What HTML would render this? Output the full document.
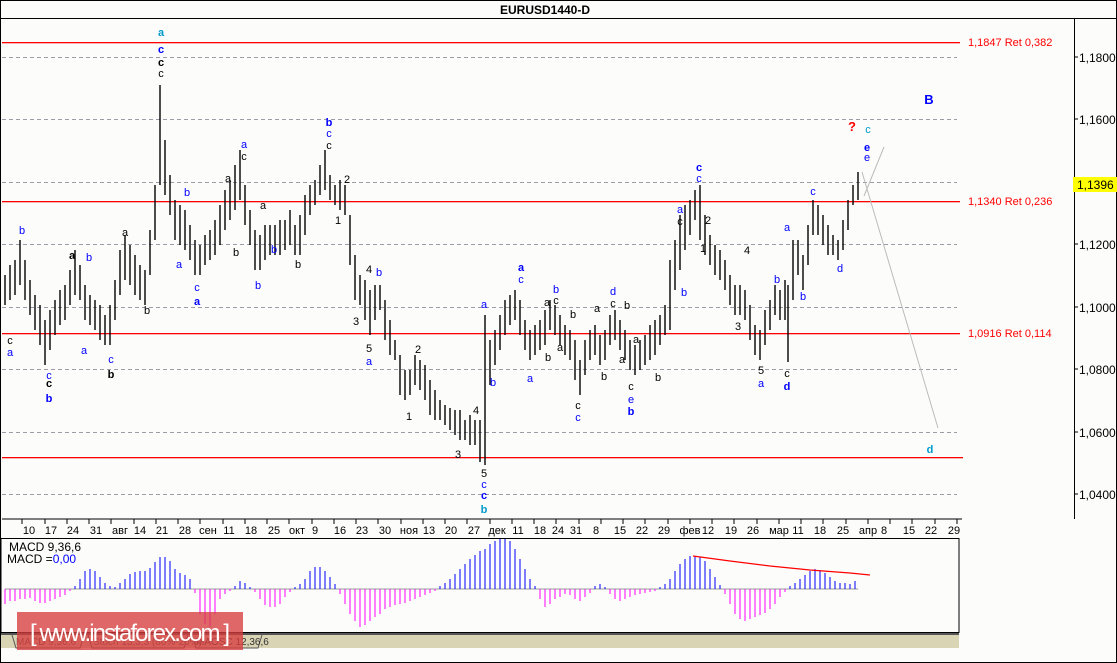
<!DOCTYPE html>
<html><head><meta charset="utf-8"><style>
html,body{margin:0;padding:0;background:#fff;}
svg{display:block;font-family:"Liberation Sans",sans-serif;}
</style></head><body>
<svg width="1117" height="663" viewBox="0 0 1117 663">
<rect x="0" y="0" width="1117" height="663" fill="#fcfdfb"/>
<rect x="0.5" y="0.5" width="1116" height="662" fill="none" stroke="#000"/>
<line x1="0" y1="18.5" x2="1117" y2="18.5" stroke="#000"/>
<text x="545" y="14" font-size="12" font-weight="bold" text-anchor="middle">EURUSD1440-D</text>
<line x1="1074.5" y1="18" x2="1074.5" y2="519" stroke="#000"/>
<g font-size="12" fill="#000">
<path d="M1074 57h4M1074 119h4M1074 244h4M1074 307h4M1074 369h4M1074 432h4M1074 494h4" stroke="#000"/>
<text x="1079" y="62">1,1800</text><text x="1079" y="124">1,1600</text><text x="1079" y="249">1,1200</text>
<text x="1079" y="312">1,1000</text><text x="1079" y="374">1,0800</text><text x="1079" y="437">1,0600</text><text x="1079" y="499">1,0400</text>
<rect x="1073" y="177" width="44" height="15" fill="#ffff00"/><text x="1077" y="189">1,1396</text>
</g>
<g stroke="#a09aa6" stroke-dasharray="4,3">
<path d="M2 57.5H957M2 119.5H957M2 182.5H957M2 244.5H957M2 307.5H957M2 369.5H957M2 432.5H957M2 494.5H957"/>
</g>
<g fill="#f00">
<rect x="2" y="42" width="958" height="1.3"/><rect x="2" y="201" width="958" height="1.3"/><rect x="2" y="333" width="958" height="1.3"/><rect x="2" y="457" width="961" height="1.3"/>
</g>
<g font-size="11" fill="#f00">
<text x="968" y="46">1,1847 Ret 0,382</text><text x="968" y="205">1,1340 Ret 0,236</text><text x="968" y="337">1,0916 Ret 0,114</text>
</g>
<path d="M864 196L884 147M862 172L938 428" stroke="#bbb" stroke-width="1"/>
<path stroke="#000" stroke-width="1.4" fill="none" d="M5 275V305M10 265V300M15 260V295M20 240V285M25 260V300M30 280V315M35 295V330M40 305V345M45 320V365M50 310V350M55 300V335M60 290V325M65 285V320M70 270V305M75 250V295M80 265V300M85 285V320M90 295V325M95 300V330M100 305V340M105 315V345M110 305V345M115 280V320M120 250V295M125 235V280M130 245V285M135 255V295M140 265V300M145 270V305M150 230V275M155 185V240M160 85V185M165 140V195M170 175V215M175 200V240M180 205V245M185 210V250M190 225V260M195 240V275M200 245V275M205 235V265M210 230V260M215 220V255M220 205V245M225 190V230M230 180V220M235 165V210M240 150V200M245 185V225M250 210V245M255 230V270M260 235V270M265 225V260M270 225V255M275 225V255M280 220V255M285 220V250M290 210V245M295 225V255M300 215V255M305 195V235M310 185V215M315 180V205M320 165V195M325 150V190M330 175V200M335 185V205M340 180V210M345 185V215M350 215V265M355 255V300M360 275V305M365 280V320M370 290V335M375 285V320M380 285V310M385 300V340M390 320V355M395 340V360M400 355V395M405 370V400M410 370V395M415 355V385M420 360V390M425 365V400M430 380V415M435 390V420M440 400V420M445 405V425M450 408V430M455 410V435M460 410V440M465 420V440M470 415V445M475 420V445M480 420V462M485 315V465M490 340V385M495 330V365M500 315V350M505 300V335M510 295V325M515 290V320M520 300V335M525 320V350M530 330V360M535 325V355M540 320V350M545 310V345M550 300V330M555 305V335M560 315V345M565 325V355M570 330V360M575 340V380M580 360V395M585 340V375M590 330V360M595 325V355M600 335V365M605 330V360M610 315V345M615 310V340M620 320V350M625 330V360M630 340V370M635 345V375M640 340V370M645 335V365M650 325V360M655 320V355M660 315V345M665 305V335M670 260V330M675 240V290M680 215V270M685 205V250M690 200V235M695 190V220M700 185V240M705 215V255M710 235V265M715 245V275M720 250V280M725 260V290M730 275V305M735 285V315M740 285V315M745 290V320M750 305V340M755 325V355M760 330V360M765 310V345M770 300V330M775 285V315M780 290V320M785 280V320M788 285V362M793 240V300M798 240V275M803 255V290M808 225V265M813 200V235M818 205V235M823 215V245M828 225V255M833 235V255M838 240V260M843 220V250M848 200V230M853 185V205M858 172V200"/>
<path stroke="#000" stroke-width="1" d="M2 519H962"/>
<g font-size="11" fill="#00f" text-anchor="middle">
<text x="161" y="36" fill="#0099cc" font-weight="bold">a</text>
<text x="161" y="53" font-weight="bold">c</text>
<text x="161" y="66" fill="#000" font-weight="bold">c</text>
<text x="161" y="77" fill="#000">c</text>
<text x="329" y="126" font-weight="bold">b</text><text x="329" y="137">c</text><text x="329" y="149" fill="#000">c</text>
<text x="244" y="148">a</text><text x="244" y="160" fill="#000">c</text>
<text x="187" y="196">b</text><text x="228" y="182" fill="#000">a</text><text x="347" y="183" fill="#000">2</text>
<text x="10" y="344" fill="#000">c</text><text x="10" y="356">a</text>
<text x="22" y="234">b</text><text x="72" y="259" fill="#000" font-weight="bold">a</text><text x="89" y="261">b</text>
<text x="49" y="379">c</text><text x="49" y="387" fill="#000" font-weight="bold">c</text><text x="49" y="402" font-weight="bold">b</text>
<text x="84" y="354">a</text><text x="111" y="363">c</text><text x="111" y="378" fill="#000" font-weight="bold">b</text>
<text x="125" y="236" fill="#000">a</text><text x="147" y="314" fill="#000">b</text>
<text x="179" y="268">a</text><text x="197" y="305" font-weight="bold">a</text><text x="197" y="291">c</text>
<text x="236" y="256" fill="#000">b</text><text x="258" y="289">b</text><text x="263" y="209" fill="#000">a</text>
<text x="274" y="253">b</text><text x="298" y="268" fill="#000">b</text><text x="338" y="224" fill="#000">1</text>
<text x="369" y="273" fill="#000">4</text><text x="379" y="276">b</text><text x="356" y="325" fill="#000">3</text>
<text x="369" y="352" fill="#000">5</text><text x="369" y="365">a</text>
<text x="418" y="353" fill="#000">2</text><text x="409" y="420" fill="#000">1</text>
<text x="476" y="414" fill="#000">4</text><text x="458" y="458" fill="#000">3</text>
<text x="484" y="477" fill="#000">5</text><text x="484" y="488">c</text><text x="484" y="499" font-weight="bold">c</text><text x="484" y="513" fill="#0099cc" font-weight="bold">b</text>
<text x="484" y="308">a</text><text x="493" y="386">b</text>
<text x="521" y="271" font-weight="bold">a</text><text x="521" y="283">c</text><text x="530" y="382">a</text>
<text x="556" y="293">b</text><text x="556" y="304" fill="#000">c</text><text x="547" y="306" fill="#000">a</text>
<text x="548" y="361" fill="#000">b</text><text x="560" y="351" fill="#000">a</text><text x="573" y="318" fill="#000">b</text>
<text x="578" y="409" fill="#000">c</text><text x="578" y="421">c</text>
<text x="597" y="312" fill="#000">a</text><text x="604" y="380" fill="#000">b</text>
<text x="613" y="295">d</text><text x="613" y="307" fill="#000">c</text><text x="627" y="309" fill="#000">b</text>
<text x="622" y="363" fill="#000">a</text><text x="636" y="343" fill="#000">a</text>
<text x="631" y="390" fill="#000">c</text><text x="631" y="403">e</text><text x="631" y="415" font-weight="bold">b</text>
<text x="658" y="381" fill="#000">b</text><text x="684" y="296">b</text>
<text x="699" y="171" font-weight="bold">c</text><text x="699" y="182">c</text>
<text x="680" y="213">a</text><text x="680" y="225" fill="#000">c</text><text x="708" y="224" fill="#000">2</text><text x="703" y="252" fill="#000">1</text>
<text x="747" y="254" fill="#000">4</text><text x="738" y="330" fill="#000">3</text>
<text x="761" y="374" fill="#000">5</text><text x="761" y="387">a</text>
<text x="787" y="377" fill="#000">c</text><text x="787" y="390" font-weight="bold">d</text>
<text x="787" y="231">a</text><text x="777" y="283">b</text><text x="803" y="300">b</text>
<text x="813" y="195">c</text><text x="840" y="272">d</text>
<text x="852" y="131" fill="#f00" font-weight="bold" font-size="13">?</text>
<text x="868" y="133" fill="#0099cc">c</text>
<text x="867" y="151" font-weight="bold">e</text><text x="867" y="161">e</text>
<text x="929" y="104" font-weight="bold" font-size="13">B</text>
<text x="930" y="453" fill="#0099cc" font-weight="bold">d</text>
</g>
<g font-size="11" fill="#000" text-anchor="middle">
<path stroke="#000" d="M22 519v5M45 519v5M67 519v5M89 519v5M111 519v5M134 519v5M156 519v5M178 519v5M200 519v5M223 519v5M245 519v5M267 519v5M289 519v5M312 519v5M334 519v5M356 519v5M378 519v5M401 519v5M423 519v5M445 519v5M467 519v5M490 519v5M512 519v5M534 519v5M556 519v5M579 519v5M601 519v5M623 519v5M645 519v5M668 519v5M690 519v5M712 519v5M734 519v5M757 519v5M779 519v5M801 519v5M823 519v5M846 519v5M868 519v5M890 519v5M912 519v5M935 519v5M957 519v5"/>
<text x="29" y="534">10</text><text x="51" y="534">17</text><text x="73" y="534">24</text><text x="96" y="534">31</text><text x="120" y="534">авг</text><text x="140" y="534">14</text><text x="162" y="534">21</text><text x="185" y="534">28</text><text x="208" y="534">сен</text><text x="229" y="534">11</text><text x="251" y="534">18</text><text x="274" y="534">25</text><text x="297" y="534">окт</text><text x="315" y="534">9</text><text x="340" y="534">16</text><text x="362" y="534">23</text><text x="385" y="534">30</text><text x="409" y="534">ноя</text><text x="429" y="534">13</text><text x="451" y="534">20</text><text x="474" y="534">27</text><text x="497" y="534">дек</text><text x="518" y="534">11</text><text x="540" y="534">18</text><text x="558" y="534">24</text><text x="576" y="534">31</text><text x="596" y="534">8</text><text x="620" y="534">15</text><text x="642" y="534">22</text><text x="664" y="534">29</text><text x="690" y="534">фев</text><text x="708" y="534">12</text><text x="731" y="534">19</text><text x="753" y="534">26</text><text x="779" y="534">мар</text><text x="798" y="534">11</text><text x="820" y="534">18</text><text x="843" y="534">25</text><text x="868" y="534">апр</text><text x="884" y="534">8</text><text x="909" y="534">15</text><text x="931" y="534">22</text><text x="954" y="534">29</text>
</g>
<rect x="1" y="538.5" width="958" height="94" fill="#fcfdfb" stroke="#000"/>
<text x="9" y="551" font-size="12">MACD 9,36,6</text>
<text x="7" y="563" font-size="12">MACD =<tspan fill="#00f">0,00</tspan></text>
<path stroke="#999" d="M5 589H858"/>
<path stroke="#ff00ff" stroke-width="1" d="M5 589v15M10 589v12M15 589v12M20 589v10M25 589v10M30 589v9M35 589v12M40 589v14M45 589v14M50 589v12M55 589v10M60 589v8M65 589v6M70 589v2M195 589v4M200 589v25M205 589v35M210 589v38M215 589v25M220 589v10M225 589v5M230 589v2M255 589v3M260 589v10M265 589v16M270 589v18M275 589v18M280 589v15M285 589v8M290 589v3M340 589v5M345 589v15M350 589v25M355 589v32M360 589v38M365 589v36M370 589v32M375 589v28M380 589v25M385 589v20M390 589v18M395 589v16M400 589v15M405 589v14M410 589v12M415 589v10M420 589v8M425 589v6M430 589v4M435 589v2M540 589v10M545 589v18M550 589v15M555 589v10M560 589v8M565 589v5M570 589v6M575 589v10M580 589v12M585 589v8M590 589v4M610 589v5M615 589v10M620 589v12M625 589v10M630 589v8M635 589v6M640 589v5M645 589v4M650 589v3M655 589v2M725 589v5M730 589v15M735 589v25M740 589v30M745 589v32M750 589v30M755 589v28M760 589v26M765 589v24M770 589v20M775 589v15M780 589v8M785 589v3"/>
<path stroke="#0000ff" stroke-width="1" d="M75 589v-3M80 589v-10M85 589v-18M90 589v-20M95 589v-18M100 589v-12M105 589v-6M110 589v-3M115 589v-2M120 589v-6M125 589v-10M130 589v-15M135 589v-17M140 589v-18M145 589v-18M150 589v-21M155 589v-27M160 589v-32M165 589v-32M170 589v-28M175 589v-20M180 589v-16M185 589v-14M190 589v-10M235 589v-3M240 589v-8M245 589v-6M250 589v-2M295 589v-2M300 589v-5M305 589v-10M310 589v-18M315 589v-22M320 589v-22M325 589v-18M330 589v-12M335 589v-5M440 589v-3M445 589v-6M450 589v-10M455 589v-15M460 589v-20M465 589v-25M470 589v-30M475 589v-34M480 589v-38M485 589v-40M490 589v-45M495 589v-48M500 589v-50M505 589v-50M510 589v-48M515 589v-40M520 589v-30M525 589v-20M530 589v-10M535 589v-3M595 589v-3M600 589v-5M605 589v-2M660 589v-2M665 589v-5M670 589v-10M675 589v-18M680 589v-25M685 589v-30M690 589v-33M695 589v-33M700 589v-32M705 589v-28M710 589v-20M715 589v-12M720 589v-4M790 589v-3M795 589v-6M800 589v-10M805 589v-14M810 589v-18M815 589v-20M820 589v-19M825 589v-16M830 589v-12M835 589v-8M840 589v-6M845 589v-6M850 589v-5M855 589v-8"/>
<path stroke="#f00" stroke-width="1.3" fill="none" d="M693 556L730 561L770 566L810 570L850 573L870 575"/>
<rect x="1" y="633" width="958" height="2" fill="#555"/>
<rect x="1" y="635" width="958" height="13" fill="#d9d4b4"/>
<path d="M12 635l4 13h64l4-13M88 635l4 13h92l4-13M192 635l4 13h62l4-13" stroke="#555" fill="none"/>
<text x="16" y="645" font-size="10" fill="#555">MACD 9,36,6</text>
<text x="93" y="645" font-size="10" fill="#555">Stoch 13,3,3 (80%-20%)</text>
<text x="196" y="645" font-size="10" fill="#333">MAOSC 12,36,6</text>
<rect x="17" y="612" width="226" height="38" fill="rgba(214,60,62,0.78)"/>
<text x="130" y="641" font-size="24" fill="#fff" text-anchor="middle" textLength="200">[ www.instaforex.com ]</text>
</svg>
</body></html>
